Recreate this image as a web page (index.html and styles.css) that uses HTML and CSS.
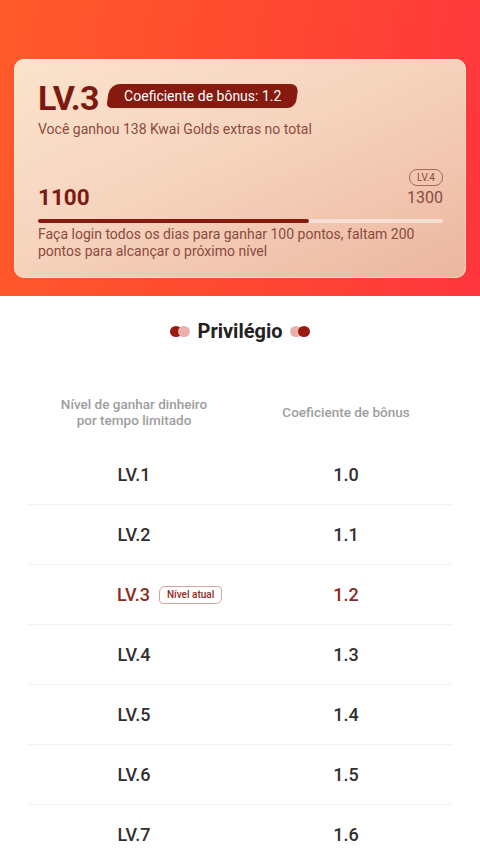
FILE: index.html
```html
<!DOCTYPE html>
<html lang="pt">
<head>
<meta charset="utf-8">
<link rel="stylesheet" href="styles.css">
</head>
<body>
<header class="hero">
  <section class="card">
    <div class="level-row">
      <span class="level">LV.3</span>
      <span class="coef-badge">Coeficiente de bônus: 1.2</span>
    </div>
    <p class="earned">Você ganhou 138 Kwai Golds extras no total</p>
    <div class="points-row">
      <span class="points">1100</span>
      <div class="next">
        <span class="next-pill">LV.4</span>
        <span class="next-points">1300</span>
      </div>
    </div>
    <div class="bar"><div class="bar-fill" style="width:66.9%"></div></div>
    <p class="note">Faça login todos os dias para ganhar 100 pontos, faltam 200 pontos para alcançar o próximo nível</p>
  </section>
</header>
<main class="content">
  <h2 class="title">
    <span class="dots left"><i class="d1"></i><i class="d2"></i></span>
    Privilégio
    <span class="dots right"><i class="d2"></i><i class="d1"></i></span>
  </h2>
  <div class="table">
    <div class="thead">
      <div class="cell">Nível de ganhar dinheiro<br>por tempo limitado</div>
      <div class="cell">Coeficiente de bônus</div>
    </div>
    <div class="row"><div class="cell">LV.1</div><div class="cell">1.0</div></div>
    <div class="row"><div class="cell">LV.2</div><div class="cell">1.1</div></div>
    <div class="row current"><div class="cell">LV.3<span class="now">Nível atual</span></div><div class="cell">1.2</div></div>
    <div class="row"><div class="cell">LV.4</div><div class="cell">1.3</div></div>
    <div class="row"><div class="cell">LV.5</div><div class="cell">1.4</div></div>
    <div class="row"><div class="cell">LV.6</div><div class="cell">1.5</div></div>
    <div class="row"><div class="cell">LV.7</div><div class="cell">1.6</div></div>
  </div>
</main>
</body>
</html>
```
FILE: styles.css
```css
* { box-sizing: border-box; }
html, body { margin: 0; padding: 0; }
body {
  width: 480px;
  height: 848px;
  overflow: hidden;
  font-family: Roboto, "Noto Sans", sans-serif;
  background: #fff;
}
p { margin: 0; }

.hero {
  background: linear-gradient(100deg, #ff5a2a 0%, #ff4a30 50%, #ff353d 100%);
  padding: 59px 14px 18px;
}

.card {
  height: 219px;
  border-radius: 10px;
  background: linear-gradient(155deg, #fbe3cd 0%, #f6d4be 45%, #ecb6a0 100%);
  box-shadow: inset 0 0 0 1px rgba(255, 240, 225, 0.5);
  padding: 19px 23px 0 24px;
  display: flex;
  flex-direction: column;
}

.level-row {
  display: flex;
  align-items: center;
  gap: 9px;
  height: 40px;
}
.level {
  font-size: 34px;
  font-weight: 700;
  color: #7c1a12;
  letter-spacing: -0.5px;
}
.coef-badge {
  position: relative;
  color: #fff;
  font-size: 14px;
  font-weight: 400;
  height: 24px;
  line-height: 24px;
  padding: 0 16px 0 16px;
  margin-top: -4px;
  z-index: 0;
}
.coef-badge::before {
  content: "";
  position: absolute;
  inset: 0;
  background: #861a0f;
  border-radius: 10px 8px 8px 5px;
  transform: skewX(-8deg);
  z-index: -1;
}

.earned {
  font-size: 14px;
  color: #8c4a3e;
  margin-top: 2px;
  line-height: 18px;
}

.points-row {
  display: flex;
  justify-content: space-between;
  align-items: flex-end;
  margin-top: 31px;
}
.points {
  font-size: 22.5px;
  font-weight: 700;
  color: #7c1a12;
  line-height: 26px;
}
.next {
  display: flex;
  flex-direction: column;
  align-items: flex-end;
  gap: 2px;
  margin-bottom: 2px;
}
.next-pill {
  font-size: 10px;
  color: #8c4a3e;
  border: 1px solid #a66a5c;
  border-radius: 8px;
  padding: 1px 7px;
  line-height: 13px;
}
.next-points {
  font-size: 16px;
  color: #8c4a3e;
  line-height: 20px;
}

.bar {
  height: 4px;
  border-radius: 2px;
  background: #f6dfd4;
  margin-top: 9px;
}
.bar-fill {
  height: 100%;
  border-radius: 2px;
  background: #861a0f;
}

.note {
  font-size: 14px;
  line-height: 17px;
  color: #8c4a3e;
  margin-top: 3px;
}

.content { padding: 0 28px; }

.title {
  margin: 0;
  height: 70px;
  padding-top: 23px;
  display: flex;
  justify-content: center;
  align-items: flex-start;
  gap: 7px;
  font-size: 20px;
  font-weight: 700;
  color: #222;
  line-height: 24px;
}
.dots {
  display: inline-flex;
  align-items: center;
  height: 24px;
}
.dots i {
  display: block;
  width: 12px;
  height: 11px;
  border-radius: 50%;
}
.dots .d1 { background: #9a1a12; }
.dots .d2 { background: #eab0aa; }
.dots.left .d2 { margin-left: -4px; }
.dots.right .d1 { margin-left: -4px; }

.table { display: flex; flex-direction: column; }
.thead, .row {
  display: grid;
  grid-template-columns: 1fr 1fr;
}
.thead {
  height: 79px;
  align-items: center;
  padding-top: 12px;
}
.thead .cell {
  text-align: center;
  font-size: 13.5px;
  font-weight: 500;
  line-height: 16px;
  color: #9e9e9e;
}
.row {
  height: 60px;
  align-items: center;
  border-bottom: 1px solid #f1f1f1;
}
.row .cell {
  font-size: 18px;
  font-weight: 500;
  color: #303030;
  display: flex;
  justify-content: center;
  align-items: center;
}
.row.current .cell { color: #8a2a22; }
.row.current .cell:first-child { justify-content: flex-start; padding-left: 89px; }
.now {
  font-size: 10px;
  font-weight: 500;
  color: #8a2a22;
  border: 1px solid #d9a4a0;
  border-radius: 6px 4px 6px 4px;
  padding: 2px 7px;
  line-height: 12px;
  margin-left: 9px;
}
```
